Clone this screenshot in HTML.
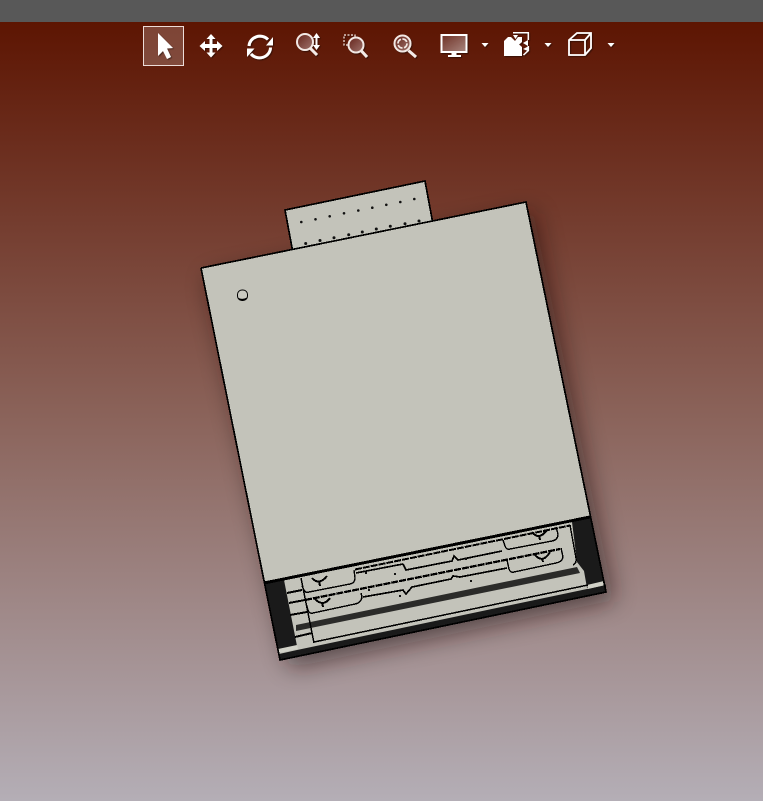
<!DOCTYPE html>
<html lang="en">
<head>
<meta charset="utf-8">
<title>CAD viewer</title>
<style>
html,body{margin:0;padding:0;width:763px;height:801px;overflow:hidden;background:#888}
#v{position:absolute;left:0;top:0;width:763px;height:801px;display:block}
</style>
</head>
<body>
<svg id="v" xmlns="http://www.w3.org/2000/svg" width="763" height="801" viewBox="0 0 763 801">
<defs>
<linearGradient id="bg" x1="0" y1="22" x2="0" y2="801" gradientUnits="userSpaceOnUse">
<stop offset="0" stop-color="#5d1502"/><stop offset=".5" stop-color="#8a6259"/><stop offset="1" stop-color="#b4aeb6"/>
</linearGradient>
<linearGradient id="lens" x1="0" y1="0" x2="1" y2="1"><stop offset="0" stop-color="#64231a"/><stop offset="1" stop-color="#a0756e"/></linearGradient>
<linearGradient id="scr" x1="0" y1="0" x2="1" y2="1"><stop offset="0" stop-color="#6e3024"/><stop offset="1" stop-color="#a98780"/></linearGradient>
<filter id="blur" x="-20%" y="-20%" width="140%" height="140%"><feGaussianBlur stdDeviation="12"/></filter>
<filter id="ds" x="-30%" y="-30%" width="160%" height="160%"><feDropShadow dx="1" dy="1" stdDeviation=".6" flood-color="#000" flood-opacity=".45"/></filter>
</defs>
<rect width="763" height="801" fill="url(#bg)"/>
<rect width="763" height="22" fill="#585858"/>

<!-- shadow -->
<polygon points="208,278 533,212 614,600 290,668" fill="#1c0f0c" opacity=".55" filter="url(#blur)"/>

<!-- rear strip -->
<polygon points="285,210 425,181 433,224 293,253" fill="#c3c3ba" stroke="#000" stroke-width="1.7" shape-rendering="crispEdges"/>
<g fill="#111">
<circle cx="301.3" cy="222" r="1.3"/><circle cx="315.5" cy="219.3" r="1.3"/><circle cx="329.7" cy="216.3" r="1.3"/><circle cx="344" cy="213.3" r="1.3"/><circle cx="358.3" cy="210.5" r="1.3"/><circle cx="372.3" cy="207.7" r="1.3"/><circle cx="386.3" cy="204.8" r="1.3"/><circle cx="400.3" cy="202" r="1.3"/><circle cx="414.3" cy="199" r="1.3"/>
<circle cx="305.7" cy="243.5" r="1.5"/><circle cx="320" cy="240.5" r="1.5"/><circle cx="334" cy="237.7" r="1.5"/><circle cx="348.7" cy="234.7" r="1.5"/><circle cx="362.3" cy="232" r="1.5"/><circle cx="376.3" cy="229" r="1.5"/><circle cx="390.3" cy="226.3" r="1.5"/><circle cx="405" cy="223.7" r="1.5"/><circle cx="419" cy="221" r="1.5"/>
</g>

<!-- full body -->
<polygon points="201,268 526,202 606,592 280,660" fill="#c3c3ba"/>

<!-- side blocks and dark bands -->
<polygon points="264,583 284,580 297,646 279,651" fill="#1a1a1a"/>
<polygon points="572,522 590,517 605,585 587,588 584,571 577,562" fill="#1a1a1a"/>
<polygon points="296,625 577,567 580,573 296,631" fill="#2b2b29"/>
<polygon points="297,650 606,585 606,592 280,660 279,654" fill="#1a1a1a"/>
<polygon points="278,649 297,645 298,649 279,653" fill="#d2d2c8"/>
<polygon points="587,585 604,581 605,585 588,589" fill="#d2d2c8"/>

<!-- lines -->
<g fill="none" stroke="#000" shape-rendering="crispEdges">
<polyline points="201,268 526,202 606,592 280,660 201,268" stroke-width="1.7"/>
<line x1="264" y1="583" x2="590" y2="517" stroke-width="3"/>
<line x1="301" y1="578" x2="314" y2="643" stroke-width="1.5"/>
<line x1="287" y1="593" x2="302" y2="590" stroke-width="2"/>
<line x1="289" y1="603" x2="305" y2="600" stroke-width="2"/>
<line x1="290" y1="615" x2="307" y2="612" stroke-width="2"/>
<line x1="295" y1="637" x2="312" y2="633" stroke-width="2"/>
<line x1="314" y1="642" x2="588" y2="585" stroke-width="1.5"/>

<!-- row 1 -->
<line x1="355" y1="569.500" x2="570" y2="525.500" stroke-width="2" stroke-dasharray="7 1"/>
<path d="M302,586 L304,590 Q305,593 309,592 L350,584 Q355,583 355,578 L354,570" stroke-width="1.400"/>
<path d="M356,573 L403,564 M403,564 L406,570 L452,561 L454,556 L458,560 L502,551" stroke-width="1.700"/>
<path d="M503,540 L505,546 Q506,550 510,549 L552,541 Q558,540 558,534 L556,527" stroke-width="1.400"/>
<path d="M570,525 L576,558 Q577,563 573,565" stroke-width="1.400"/>
<path d="M312,578 Q319,586 327,576 M319,581 L320,586" stroke-width="2"/>
<path d="M532,532 Q539,541 547,530 M539,535 L540,540" stroke-width="2"/>

<!-- row 2 -->
<line x1="305" y1="600" x2="560" y2="549" stroke-width="2.200" stroke-dasharray="7 1"/>
<path d="M306,603 L308,610 Q309,614 313,613 L355,604 Q361,603 362,597 L361,593" stroke-width="1.400"/>
<path d="M363,597 L403,590 L406,594 L412,587 L451,579 L453,576 L460,577 L507,568" stroke-width="1.700"/>
<path d="M507,560 L509,569 Q510,573 514,572 L556,563 Q562,562 563,557 L561,548" stroke-width="1.400"/>
<path d="M314,598 Q323,608 330,598 M322,602 L323,607" stroke-width="2"/>
<path d="M535,555 Q543,564 550,552 M542,558 L543,562" stroke-width="2"/>
</g>
<g fill="#111">
<rect x="394" y="573" width="2" height="2"/><rect x="399" y="595" width="2" height="2"/><rect x="465" y="558" width="2" height="2"/><rect x="470" y="580" width="2" height="2"/><rect x="365" y="572" width="2" height="2"/><rect x="368" y="589" width="2" height="2"/>
</g>

<!-- plate hole -->
<rect x="237.500" y="290" width="10" height="10.500" rx="4.500" fill="#c9c9c0" stroke="#000" stroke-width="1"/>
<path d="M238.500,298 Q242.500,300 247,297.500 L246.500,299 Q243,301.500 239,300 Z" fill="#000"/>

<!-- toolbar -->
<rect x="143.500" y="26.500" width="40" height="39" fill="#fff" fill-opacity=".2" stroke="#ecdcd8" stroke-width="1"/>
<g filter="url(#ds)">
<!-- arrow -->
<path d="M158,33 L158,56 L163,51 L167,59 L171,57 L167,48.500 L173,48 Z" fill="#fff"/>
<!-- move -->
<path d="M211,34 L215.500,39 L212.500,39 L212.500,44 L217,44 L217,41 L222.500,46 L217,51 L217,48 L212.500,48 L212.500,52.500 L215.500,52.500 L211,57.500 L206.500,52.500 L209.500,52.500 L209.500,48 L205,48 L205,51 L199.500,46 L205,41 L205,44 L209.500,44 L209.500,39 L206.500,39 Z" fill="#fff"/>
<!-- rotate -->
<path d="M249,46 A11,10.500 0 0 1 268,39.500" fill="none" stroke="#fff" stroke-width="3"/>
<path d="M266,45.500 L273,45.500 L273,37 Z" fill="#fff"/>
<path d="M270.500,47.500 A11,10.500 0 0 1 251,54" fill="none" stroke="#fff" stroke-width="3"/>
<path d="M247,48.500 L254.500,48.500 L247,57 Z" fill="#fff"/>
<!-- zoom fit -->
<circle cx="305" cy="42" r="8" fill="url(#lens)" stroke="#f2e8e4" stroke-width="2"/>
<line x1="310.500" y1="48.500" x2="317" y2="55" stroke="#f4ebe8" stroke-width="3"/>
<path d="M316.500,33 L320,38 L317.500,38 L317.500,45 L320,45 L316.500,50 L313,45 L315.500,45 L315.500,38 L313,38 Z" fill="#fff"/>
<!-- zoom area -->
<rect x="344" y="35" width="11" height="10" fill="none" stroke="#f2e8e4" stroke-width="1.200" stroke-dasharray="2 1.500"/>
<circle cx="356" cy="45" r="7.500" fill="url(#lens)" stroke="#f2e8e4" stroke-width="2"/>
<line x1="361.500" y1="51" x2="367" y2="57" stroke="#f4ebe8" stroke-width="3"/>
<!-- zoom previous -->
<circle cx="402.500" cy="43.500" r="8" fill="url(#lens)" stroke="#f2e8e4" stroke-width="2"/>
<circle cx="402.500" cy="43.500" r="4.500" fill="none" stroke="#f2e8e4" stroke-width="1.700" stroke-dasharray="5.500 1.500"/>
<line x1="408.500" y1="50.500" x2="416" y2="57" stroke="#f4ebe8" stroke-width="3"/>
<!-- display -->
<rect x="441.500" y="35" width="25" height="17" fill="url(#scr)" stroke="#fff" stroke-width="2"/>
<rect x="451.500" y="52" width="5" height="3.500" fill="#fff"/>
<rect x="448" y="55" width="13" height="2" fill="#fff"/>
<path d="M481.500,43 L488.500,43 L485,47 Z" fill="#fff"/>
<!-- view orientation -->
<path d="M504,41 L508,37 L511,37 L515,41 L518,37 L522,37 L522,42 L519,44.500 L522,47 L522,56 L504,56 Z" fill="#fff"/>
<path d="M513,32.800 L528.300,32.800 L528.300,40" fill="none" stroke="#fff" stroke-width="1.500"/>
<path d="M528.300,46 L528.300,50.500 L523.500,55" fill="none" stroke="#fff" stroke-width="1.500"/>
<path d="M523,43 L528,40 L528,46 Z M523,49 L528,46.500 L528,51 Z M513,35 L518,35 L515.500,39 Z" fill="#fff"/>
<path d="M544.500,43 L551.500,43 L548,47 Z" fill="#fff"/>
<!-- cube -->
<path d="M569,40 L577,33 L591,33 L591,48 L585,55 L569,55 Z M569,40 L585,40 L585,55 M585,40 L591,33" fill="none" stroke="#fff" stroke-width="1.800"/>
<path d="M607.500,43 L614.500,43 L611,47 Z" fill="#fff"/>
</g>
</svg>
</body>
</html>
